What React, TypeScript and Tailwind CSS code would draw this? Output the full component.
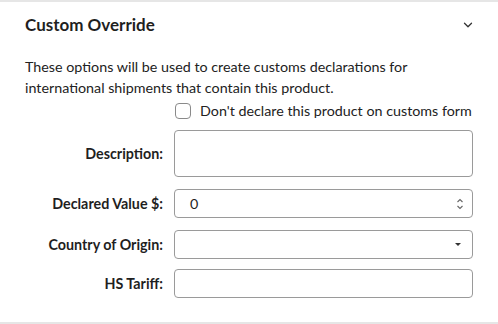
import React, { useState } from 'react';
import { ChevronDown } from 'lucide-react';

const font = { fontFamily: 'Lato, "Noto Sans", sans-serif' };

export default function App() {
  const [skip, setSkip] = useState(false);

  return (
    <div className="w-[498px] h-[324px] bg-white text-[#1f1f1f]" style={font}>
      <div className="border-t-2 border-b-2 border-[#e6e6e6] h-[324px] px-[25px]">
        {/* Header */}
        <div className="flex items-center justify-between h-[40px] pt-[6px]">
          <h2 className="text-[17px] font-bold">Custom Override</h2>
          <ChevronDown className="w-[14px] h-[14px] mr-[-2px] text-[#333]" strokeWidth={2.2} />
        </div>

        {/* Description */}
        <p className="mt-[14px] text-[14.3px] leading-[21px] text-[#222]">
          These options will be used to create customs declarations for
          <br />
          international shipments that contain this product.
        </p>

        {/* Form */}
        <div className="grid grid-cols-[138px_1fr] gap-x-[11px] mt-[3px]">
          <div />
          <label className="flex items-center gap-[9px] h-[20px] text-[14.3px] text-[#222] whitespace-nowrap">
            <input
              type="checkbox"
              checked={skip}
              onChange={() => setSkip(!skip)}
              className="appearance-none w-[16px] h-[16px] rounded-[4px] border border-[#8a8a8a] bg-white ml-[1px]"
            />
            Don't declare this product on customs form
          </label>

          <div className="flex items-center justify-end h-[47px] mt-[9px] text-[14.3px] font-bold">Description:</div>
          <textarea className="h-[47px] mt-[9px] rounded-[4px] border border-[#9a9a9a] resize-none outline-none" />

          <div className="flex items-center justify-end h-[29px] mt-[12px] text-[14.3px] font-bold">Declared Value $:</div>
          <div className="flex items-center h-[29px] mt-[12px] rounded-[4px] border border-[#9a9a9a] pl-[15px] pr-[8px] text-[14.3px]">
            <span className="flex-1">0</span>
            <svg width="8" height="14" viewBox="0 0 8 14" fill="none" stroke="#666" strokeWidth="1.1">
              <path d="M1.5 5 L4 2.5 L6.5 5" />
              <path d="M1.5 9 L4 11.5 L6.5 9" />
            </svg>
          </div>

          <div className="flex items-center justify-end h-[29px] mt-[12px] text-[14.3px] font-bold">Country of Origin:</div>
          <div className="flex items-center justify-end h-[29px] mt-[12px] rounded-[4px] border border-[#9a9a9a] pr-[10px]">
            <svg width="8" height="5" viewBox="0 0 8 5">
              <path d="M1 1 L7 1 L4 4 Z" fill="#333" />
            </svg>
          </div>

          <div className="flex items-center justify-end h-[29px] mt-[10px] text-[14.3px] font-bold">HS Tariff:</div>
          <input className="h-[29px] mt-[10px] rounded-[4px] border border-[#9a9a9a] outline-none" />
        </div>
      </div>
    </div>
  );
}
